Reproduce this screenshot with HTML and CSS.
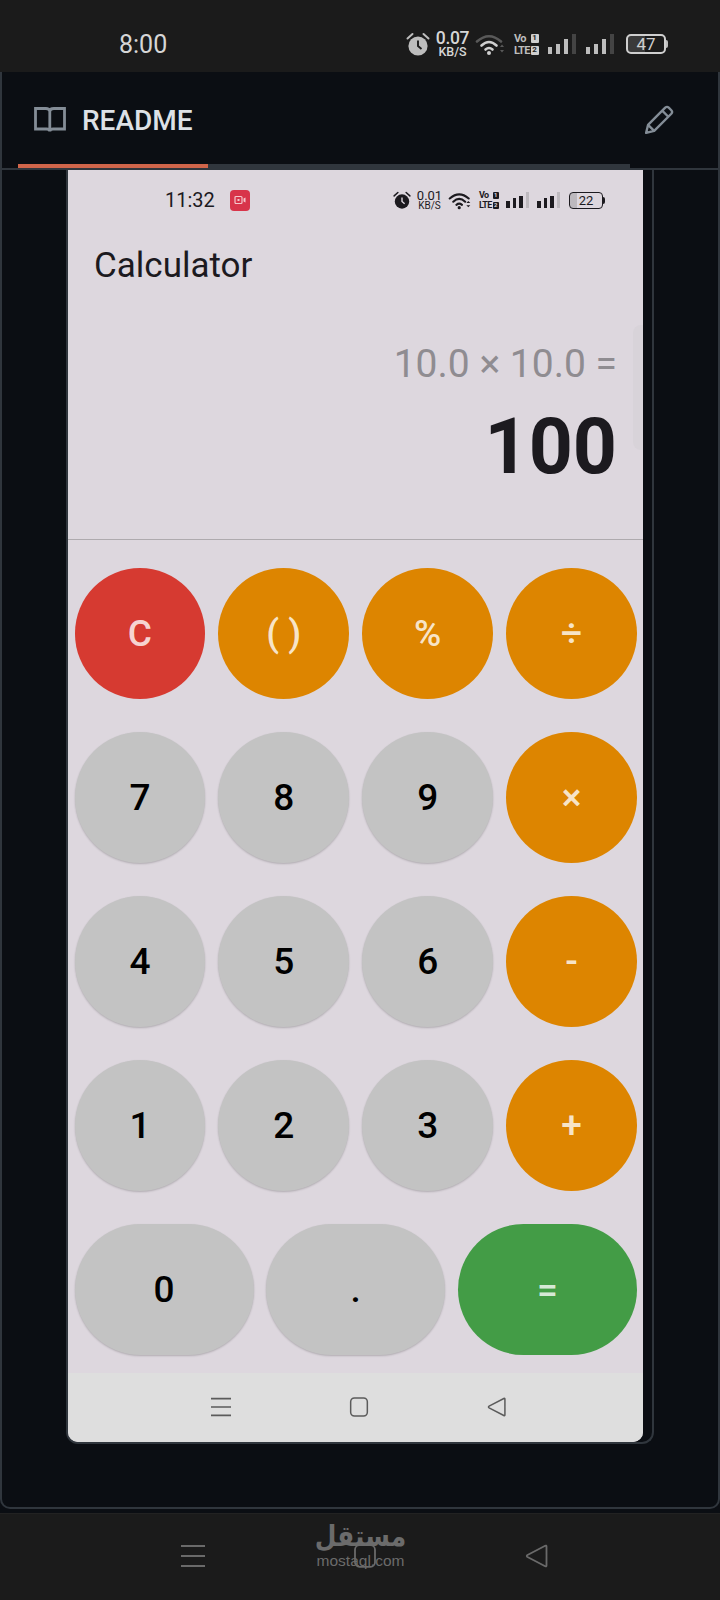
FILE: index.html
```html
<!DOCTYPE html>
<html lang="en">

<head>
    <meta charset="UTF-8">
    <meta name="viewport" content="width=device-width, initial-scale=1.0">
    <title>README - Calculator</title>
    <link rel="stylesheet" href="styles.css">
</head>

<body>
    <svg class="defs" width="0" height="0">
        <symbol id="i-alarm" viewBox="0 0 24 24">
            <path d="M1.5 6.5 6.5 2M22.5 6.5 17.5 2" fill="none" stroke="currentColor" stroke-width="2" stroke-linecap="round" />
            <circle cx="12" cy="14" r="9.6" fill="currentColor" />
            <path d="M12 8.5V14l3.5 3" fill="none" stroke="var(--hole)" stroke-width="1.9" />
        </symbol>
        <symbol id="i-menu" viewBox="0 0 24 24">
            <path d="M0 2h24M0 12h24M0 22h24" fill="none" stroke="currentColor" stroke-width="2" />
        </symbol>
        <symbol id="i-home" viewBox="0 0 24 24">
            <rect x="2" y="1.2" width="20" height="21.6" rx="4.5" fill="none" stroke="currentColor" stroke-width="1.8" />
        </symbol>
        <symbol id="i-back" viewBox="0 0 24 24">
            <path d="M21.5 2.5v19q0 1.4-1.3.7L2.5 13q-1.5-1 0-2L20.200 1.800q1.300-.7 1.300.7z" fill="none" stroke="currentColor" stroke-width="1.800" stroke-linejoin="round" />
        </symbol>
    </svg>

    <header class="sys-bar">
        <span class="sys-time">8:00</span>
        <div class="status status-top">
            <svg class="st-alarm"><use href="#i-alarm" /></svg>
            <div class="st-net"><b>0.07</b><small>KB/S</small></div>
            <svg class="st-wifi" viewBox="0 0 30 24">
                <path class="wifi-dim" d="M2 9.500Q14-1 26 9.500" />
                <path d="M6.500 13.500Q14 6.500 21.500 13.500M10.500 17.500Q14 14.500 17.500 17.500" />
                <circle cx="14" cy="21" r="2" />
                <path class="wifi-arrows" d="M25 15h4l-2-2.500zM25 18h4l-2 2.500z" />
            </svg>
            <div class="st-vo"><span>Vo</span><i>1</i><span>LTE</span><i>2</i></div>
            <div class="st-sig"><u class="b1"></u><u class="b2"></u><u class="b3"></u><u class="b4"></u></div>
            <div class="st-sig"><u class="b1"></u><u class="b2"></u><u class="b3"></u><u class="b4"></u></div>
            <div class="st-bat"><span class="bat-body">47</span><span class="bat-nub"></span></div>
        </div>
    </header>

    <main class="frame">
        <div class="tab-head">
            <svg class="book" viewBox="0 0 32 27">
                <path d="M15.800 4.500C15.800 2.500 14 1.500 12 1.500H1.500v20.500h11c2 0 3.300 1 3.300 2.500 0-1.500 1.300-2.500 3.300-2.500h11.400V1.500H19.800c-2 0-4 1-4 3zV24" />
            </svg>
            <h1>README</h1>
            <svg class="pencil" viewBox="0 0 28 28">
                <path d="M2 26l1.800-7.500L19.800 2.500q1.700-1.500 3.300 0l2.400 2.400q1.500 1.600 0 3.300L9.500 24.200zM3.800 18.500l5.700 5.700M17 5.300l5.700 5.700" />
            </svg>
        </div>
        <div class="tab-rule"><span class="tab-active"></span><span class="tab-rest"></span></div>

        <div class="shot">
            <div class="phone">
                <div class="phone-status">
                    <span class="phone-time">11:32</span>
                    <span class="rec">
                        <svg viewBox="0 0 12 10">
                            <rect x="1" y="1.500" width="7" height="7" rx="1" fill="none" stroke="#f4c6cc" stroke-width="1.200" />
                            <rect x="3.500" y="4" width="2" height="2" fill="#f4c6cc" />
                            <path d="M9.500 3.500l2-1v5l-2-1z" fill="#f4c6cc" />
                        </svg>
                    </span>
                    <div class="status status-phone">
                        <svg class="st-alarm"><use href="#i-alarm" /></svg>
                        <div class="st-net"><b>0.01</b><small>KB/S</small></div>
                        <svg class="st-wifi" viewBox="0 0 30 24">
                            <path d="M2 9.500Q14-1 26 9.500M6.500 13.500Q14 6.500 21.500 13.500M10.500 17.500Q14 14.500 17.500 17.500" />
                            <circle cx="14" cy="21" r="2" />
                            <path class="wifi-arrows" d="M23 15h5l-2.500-2.500zM23 18h5l-2.500 2.500z" />
                        </svg>
                        <div class="st-vo"><span>Vo</span><i>1</i><span>LTE</span><i>2</i></div>
                        <div class="st-sig"><u class="b1"></u><u class="b2"></u><u class="b3"></u><u class="b4"></u></div>
                        <div class="st-sig"><u class="b1"></u><u class="b2"></u><u class="b3"></u><u class="b4"></u></div>
                        <div class="st-bat"><span class="bat-body">22</span><span class="bat-nub"></span></div>
                    </div>
                </div>

                <div class="app-title">Calculator</div>

                <div class="display">
                    <div class="expr">10.0 × 10.0 =</div>
                    <div class="result">100</div>
                    <span class="scroll-hint"></span>
                </div>

                <div class="keypad">
                    <div class="key-row">
                        <button class="key key-red">C</button>
                        <button class="key key-op">( )</button>
                        <button class="key key-op">%</button>
                        <button class="key key-op">÷</button>
                    </div>
                    <div class="key-row">
                        <button class="key">7</button>
                        <button class="key">8</button>
                        <button class="key">9</button>
                        <button class="key key-op">×</button>
                    </div>
                    <div class="key-row">
                        <button class="key">4</button>
                        <button class="key">5</button>
                        <button class="key">6</button>
                        <button class="key key-op">-</button>
                    </div>
                    <div class="key-row">
                        <button class="key">1</button>
                        <button class="key">2</button>
                        <button class="key">3</button>
                        <button class="key key-op">+</button>
                    </div>
                    <div class="key-row key-row-wide">
                        <button class="key">0</button>
                        <button class="key">.</button>
                        <button class="key key-green">=</button>
                    </div>
                </div>

                <div class="phone-nav">
                    <svg><use href="#i-menu" /></svg>
                    <svg><use href="#i-home" /></svg>
                    <svg><use href="#i-back" /></svg>
                </div>
            </div>
        </div>
    </main>

    <footer class="sys-nav">
        <svg><use href="#i-menu" /></svg>
        <svg><use href="#i-home" /></svg>
        <svg><use href="#i-back" /></svg>
        <div class="watermark">
            <span class="wm-ar">مستقل</span>
            <span class="wm-en">mostaql.com</span>
        </div>
    </footer>
</body>

</html>
```

FILE: styles.css
```css
* {
    box-sizing: border-box;
}

body {
    margin: 0;
    width: 720px;
    height: 1600px;
    display: flex;
    flex-direction: column;
    font-family: Roboto, Arial, sans-serif;
    background-color: #0b0e13;
    overflow: hidden;
}

.defs {
    position: absolute;
}

/* top system bar */
.sys-bar {
    height: 72px;
    flex: none;
    display: flex;
    align-items: center;
    padding: 16px 52px 0 119px;
    background-color: #1b1b1b;
    color: #d6d6d6;
    --hole: #1b1b1b;
}

.sys-time {
    font-size: 25px;
}

/* status icons, shared by both bars */
.status {
    margin-left: auto;
    display: flex;
    align-items: center;
}

.st-alarm,
.st-wifi {
    display: block;
}

.st-net {
    display: flex;
    flex-direction: column;
    align-items: center;
    line-height: 1;
}

.st-net b,
.st-net small {
    font-weight: 500;
}

.st-wifi path {
    fill: none;
    stroke: currentColor;
    stroke-width: 2.600;
    stroke-linecap: round;
}

.st-wifi circle {
    fill: currentColor;
}

.st-wifi .wifi-arrows {
    fill: currentColor;
    stroke: none;
}

.st-vo {
    display: grid;
    grid-template-columns: 1fr auto;
    align-items: center;
    gap: 1px;
    font-weight: 700;
    line-height: 1;
}

.st-vo span {
    white-space: nowrap;
}

.st-vo i {
    font-style: normal;
    text-align: center;
    border-radius: 1px;
}

.st-sig {
    display: flex;
    align-items: flex-end;
}

.st-sig u {
    display: block;
    background-color: currentColor;
}

.st-bat {
    display: flex;
    align-items: center;
}

.bat-body {
    display: flex;
    align-items: center;
    justify-content: center;
    border: 2px solid currentColor;
    border-radius: 5px;
}

.bat-nub {
    width: 2px;
    background-color: currentColor;
    border-radius: 0 2px 2px 0;
}

/* sizes of the big bar */
.status-top {
    color: #bdbdbd;
}

.status-top .st-alarm {
    width: 24px;
    height: 24px;
}

.status-top .st-net {
    width: 33px;
    margin-left: 6px;
    color: #d6d6d6;
}

.status-top .st-net b {
    font-size: 17.500px;
    line-height: 15px;
    letter-spacing: -0.3px;
}

.status-top .st-net small {
    font-size: 12.500px;
    line-height: 12px;
}

.status-top .st-wifi {
    width: 30px;
    height: 24px;
    margin-left: 6px;
    color: #cfcfcf;
}

.status-top .wifi-dim,
.status-top .wifi-arrows {
    opacity: 0.35;
}

.status-top .st-vo {
    width: 24px;
    margin-left: 9px;
    font-size: 11px;
}

.status-top .st-vo span {
    letter-spacing: -0.7px;
}

.status-top .st-vo i {
    width: 8px;
    height: 9px;
    font-size: 8px;
    color: #222;
    background-color: #cfcfcf;
}

.status-top .st-sig {
    width: 30px;
    margin-left: 10px;
    gap: 4px;
}

.status-top .st-sig + .st-sig {
    margin-left: 8px;
}

.status-top .st-sig u {
    width: 4px;
}

.status-top .st-sig .b1 {
    height: 7px;
}

.status-top .st-sig .b2 {
    height: 10px;
}

.status-top .st-sig .b3 {
    height: 15px;
}

.status-top .st-sig .b4 {
    height: 20px;
    background-color: #444;
}

.status-top .st-bat {
    margin-left: 10px;
}

.status-top .bat-body {
    width: 40px;
    height: 20px;
    font-size: 17px;
    color: #cfcfcf;
    background: linear-gradient(90deg, #3a3a3a 47%, transparent 47%);
}

.status-top .bat-nub {
    height: 8px;
}

/* the readme file frame */
.frame {
    height: 1437px;
    flex: none;
    display: flex;
    flex-direction: column;
    border: 2px solid #30363d;
    border-top: 0;
    border-radius: 0 0 10px 10px;
}

.tab-head {
    height: 92px;
    flex: none;
    display: flex;
    align-items: center;
    padding: 4px 44px 0 32px;
}

.tab-head h1 {
    margin: 0 0 0 16px;
    font-size: 28px;
    font-weight: 500;
    color: #dde1e6;
}

.book {
    width: 32px;
    height: 27px;
}

.book path {
    fill: none;
    stroke: #848d97;
    stroke-width: 2.800;
}

.pencil {
    margin-left: auto;
    width: 30px;
    height: 30px;
}

.pencil path {
    fill: none;
    stroke: #848d97;
    stroke-width: 2.200;
    stroke-linejoin: round;
}

.tab-rule {
    height: 6px;
    flex: none;
    display: flex;
    align-items: flex-start;
    border-bottom: 2px solid #30363d;
}

.tab-active {
    margin-left: 16px;
    width: 190px;
    height: 4px;
    background-color: #d0654a;
}

.tab-rest {
    width: 422px;
    height: 4px;
    background-color: #30363d;
}

/* framed screenshot */
.shot {
    width: 588px;
    height: 1274px;
    margin-left: 64px;
    padding-right: 9px;
    border: 2px solid #30363d;
    border-top: 0;
    border-radius: 0 0 12px 12px;
}

.phone {
    height: 100%;
    display: flex;
    flex-direction: column;
    background-color: #ddd7de;
    border-radius: 0 0 10px 10px;
    overflow: hidden;
    color: #1c1a1f;
    --hole: #ddd7de;
}

.phone-status {
    height: 60px;
    flex: none;
    display: flex;
    align-items: center;
    padding: 0 38px 0 97px;
}

.phone-time {
    font-size: 20px;
}

.rec {
    margin-left: 15px;
    width: 20px;
    height: 21px;
    display: flex;
    align-items: center;
    justify-content: center;
    border-radius: 4px;
    background-color: #d8344a;
}

.rec svg {
    width: 12px;
    height: 10px;
}

.status-phone .st-alarm {
    width: 18px;
    height: 18px;
}

.status-phone .st-net {
    width: 23px;
    margin-left: 7px;
}

.status-phone .st-net b {
    font-size: 13px;
    line-height: 11px;
    font-weight: 400;
}

.status-phone .st-net small {
    font-size: 10px;
    line-height: 9px;
    font-weight: 400;
}

.status-phone .st-wifi {
    width: 24px;
    height: 19px;
    margin-left: 7px;
}

.status-phone .st-vo {
    width: 19px;
    margin-left: 7px;
    font-size: 9px;
}

.status-phone .st-vo span {
    letter-spacing: -0.6px;
}

.status-phone .st-vo i {
    width: 6px;
    height: 7px;
    font-size: 6px;
    color: #ddd7de;
    background-color: #1c1a1f;
}

.status-phone .st-sig {
    width: 23px;
    margin-left: 8px;
    gap: 3px;
}

.status-phone .st-sig u {
    width: 3.500px;
}

.status-phone .st-sig .b1 {
    height: 7px;
}

.status-phone .st-sig .b2 {
    height: 10px;
}

.status-phone .st-sig .b3 {
    height: 12px;
}

.status-phone .st-sig .b4 {
    height: 16px;
    background-color: #bdb9be;
}

.status-phone .st-bat {
    margin-left: 9px;
}

.status-phone .bat-body {
    width: 34px;
    height: 17px;
    font-size: 13px;
    border-width: 1.500px;
    border-radius: 4px;
    background: linear-gradient(90deg, #bdb9be 22%, transparent 22%);
}

.status-phone .bat-nub {
    height: 7px;
}

.app-title {
    margin: 16px 0 0 26px;
    font-size: 35px;
    line-height: 40px;
    color: #1c1a1f;
}

.display {
    position: relative;
    height: 254px;
    padding: 56px 26px 0 0;
    text-align: right;
    border-bottom: 1px solid #aeaaae;
}

.expr {
    font-size: 39px;
    line-height: 44px;
    color: #8f8c91;
}

.result {
    margin-top: 16px;
    font-size: 77px;
    line-height: 90px;
    font-weight: 700;
}

/* faint bar over the right edge */
.scroll-hint {
    position: absolute;
    right: 0;
    top: 39px;
    width: 10px;
    height: 125px;
    border-radius: 8px 0 0 8px;
    background-color: #d8d3d9;
}

.keypad {
    flex: 1;
    display: flex;
    flex-direction: column;
    gap: 33px;
    padding: 28px 6px 0 6.500px;
}

.key-row {
    display: flex;
    gap: 13px;
}

.key {
    flex: 1;
    height: 131px;
    padding: 0;
    border: none;
    border-radius: 66px;
    font-family: Roboto, Arial, sans-serif;
    font-size: 37px;
    font-weight: 500;
    color: #000;
    background-color: #c3c3c3;
    box-shadow: 0 1px 2px rgba(0, 0, 0, 0.2);
}

.key-op,
.key-red,
.key-green {
    color: rgba(255, 255, 255, 0.8);
    box-shadow: none;
}

.key-op {
    background-color: #dd8500;
}

.key-red {
    background-color: #d63a31;
}

.key-green {
    background-color: #439c46;
}

.key-row-wide {
    gap: 12.500px;
}

.phone-nav {
    height: 69px;
    flex: none;
    display: flex;
    align-items: center;
    gap: 118px;
    padding: 0 0 2px 143px;
    background-color: #dedede;
    color: #5b5b5b;
}

.phone-nav svg {
    width: 20px;
    height: 20px;
}

/* bottom system bar */
.sys-nav {
    position: relative;
    margin-top: 4px;
    flex: 1;
    display: flex;
    align-items: center;
    gap: 148px;
    padding: 0 0 2px 181px;
    background-color: #1b1b1b;
    color: #6a6a6a;
    border-top: 1px solid #222;
}

.sys-nav svg {
    width: 24px;
    height: 24px;
}

.watermark {
    position: absolute;
    left: 317px;
    top: 10px;
    width: 87px;
    display: flex;
    flex-direction: column;
    align-items: center;
    color: #6b6b6b;
}

.wm-ar {
    font-family: "DejaVu Sans", sans-serif;
    font-size: 25px;
    line-height: 30px;
    font-weight: 700;
    transform: scaleY(1.15);
    transform-origin: bottom;
}

.wm-en {
    font-family: "Liberation Sans", sans-serif;
    font-size: 15.500px;
    line-height: 14px;
}
```
